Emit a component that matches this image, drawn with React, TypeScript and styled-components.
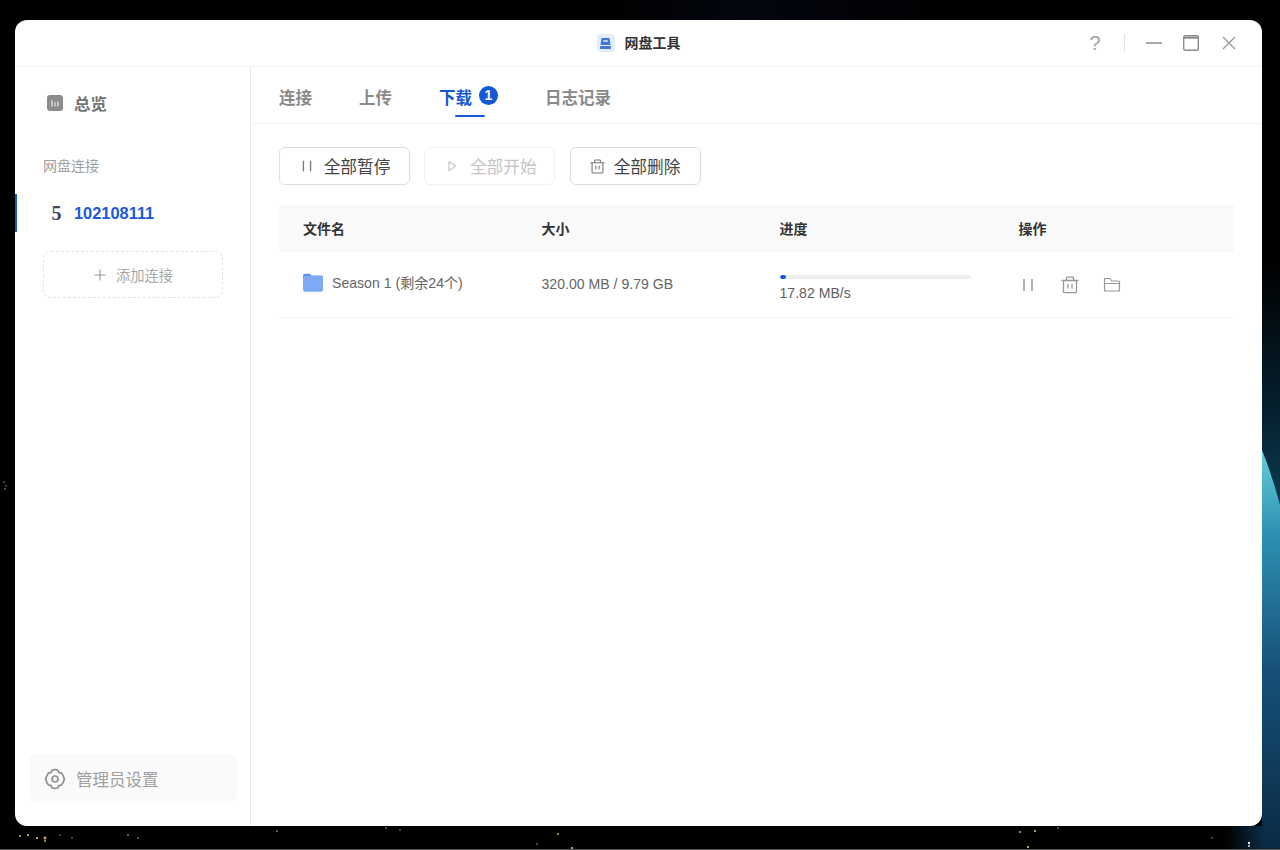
import React from "react";
import styled, { createGlobalStyle } from "styled-components";

const Global = createGlobalStyle`
  html, body { margin: 0; padding: 0; background: #000; }
  body { font-family: "Liberation Sans", "Noto Sans CJK SC", sans-serif; overflow: hidden; }
`;

const Desktop = styled.div`
  position: relative;
  width: 1280px;
  height: 850px;
  box-sizing: border-box;
  padding: 20px 18px 24px 15px;
  background: #000;
  overflow: hidden;
`;

const Wallpaper = styled.svg`
  position: absolute;
  inset: 0;
  width: 1280px;
  height: 850px;
`;

const Window = styled.div`
  position: relative;
  height: 100%;
  display: flex;
  flex-direction: column;
  background: #fff;
  border-radius: 12px;
  overflow: hidden;
`;

const TitleBar = styled.header`
  position: relative;
  height: 46px;
  flex: none;
  display: flex;
  align-items: center;
  justify-content: center;
  gap: 10px;
  border-bottom: 1px solid #f2f2f3;
`;

const AppBadge = styled.span`
  width: 18px;
  height: 18px;
  border-radius: 4px;
  background: #e3edfb;
  display: flex;
  align-items: center;
  justify-content: center;
`;

const AppTitle = styled.span`
  font-size: 14px;
  line-height: 16px;
  margin-bottom: 1px;
  font-weight: 700;
  color: #333;
`;

const WindowControls = styled.div`
  position: absolute;
  right: 25px;
  top: 14px;
  display: flex;
  align-items: center;
  color: #8c8c8c;
`;

const HelpMark = styled.span`
  width: 20px;
  text-align: center;
  font-size: 20px;
  line-height: 18px;
  color: #a0a0a0;
`;

const ControlDivider = styled.span`
  width: 1px;
  height: 18px;
  margin: 0 20px 0 19px;
  background: #e2e2e2;
`;

const Body = styled.div`
  flex: 1;
  display: flex;
  min-height: 0;
`;

const Sidebar = styled.aside`
  width: 236px;
  flex: none;
  box-sizing: border-box;
  border-right: 1px solid #e9e9ea;
  display: flex;
  flex-direction: column;
`;

const OverviewItem = styled.div`
  display: flex;
  align-items: center;
  gap: 11px;
  height: 24px;
  margin: 24px 0 0 32px;
  font-size: 16.4px;
  font-weight: 700;
  color: #737373;
`;

const SectionLabel = styled.div`
  margin: 41px 0 0 28px;
  font-size: 14px;
  line-height: 20px;
  color: #a0a0a0;
`;

const ConnectionItem = styled.div`
  height: 38px;
  margin-top: 18px;
  box-sizing: border-box;
  border-left: 2px solid #1558d6;
  padding-left: 32px;
  display: flex;
  align-items: center;
  gap: 10px;
  font-size: 16.4px;
  font-weight: 700;
  color: #1a5ad7;
`;

const ConnectionGlyph = styled.span`
  width: 15px;
  font-family: "Liberation Serif", serif;
  font-size: 20px;
  font-weight: 700;
  color: #3a4560;
  text-align: center;
`;

const AddButton = styled.div`
  width: 180px;
  height: 47px;
  margin: 19px 0 0 28px;
  box-sizing: border-box;
  border: 1px dashed #e4e4e4;
  border-radius: 8px;
  display: flex;
  align-items: center;
  justify-content: center;
  gap: 9px;
  font-size: 14.3px;
  color: #a8a8a8;
`;

const SidebarSpacer = styled.div`
  flex: 1;
`;

const AdminButton = styled.div`
  height: 49px;
  margin: 0 13px 23px 14px;
  padding-left: 15px;
  border-radius: 8px;
  background: #fafafa;
  display: flex;
  align-items: center;
  gap: 10px;
  font-size: 16.5px;
  color: #a0a0a0;
`;

const Main = styled.main`
  flex: 1;
  min-width: 0;
  display: flex;
  flex-direction: column;
`;

const Tabs = styled.nav`
  height: 57px;
  flex: none;
  box-sizing: border-box;
  padding-left: 28px;
  border-bottom: 1px solid #f2f2f3;
  display: flex;
  gap: 47px;
`;

const Tab = styled.div<{ $active?: boolean }>`
  position: relative;
  display: flex;
  align-items: flex-start;
  gap: 7px;
  padding-top: 20px;
  font-size: 16.5px;
  line-height: 22px;
  font-weight: 700;
  color: ${(p) => (p.$active ? "#1558d6" : "#8a8a8a")};
`;

const TabUnderline = styled.span`
  position: absolute;
  left: 16px;
  top: 48px;
  width: 30px;
  height: 2px;
  border-radius: 1px;
  background: #1558d6;
`;

const CountBadge = styled.span`
  width: 19px;
  height: 19px;
  margin-top: -1px;
  border-radius: 50%;
  background: #1558d6;
  color: #fff;
  font-size: 14px;
  line-height: 19px;
  text-align: center;
`;

const Content = styled.div`
  padding: 23px 28px 0;
`;

const Toolbar = styled.div`
  display: flex;
  gap: 14.25px;
`;

const ToolButton = styled.div<{ $disabled?: boolean }>`
  width: 131px;
  height: 38px;
  box-sizing: border-box;
  border: 1px solid ${(p) => (p.$disabled ? "#f1f1f1" : "#dedede")};
  border-radius: 6px;
  display: flex;
  align-items: center;
  justify-content: center;
  gap: 9px;
  font-size: 16.7px;
  color: ${(p) => (p.$disabled ? "#c4c4c4" : "#444")};
`;

const Grid = styled.div`
  display: grid;
  grid-template-columns: 238.5px 238px 239px 1fr;
  width: 955px;
`;

const HeadCell = styled.div`
  height: 47px;
  box-sizing: border-box;
  margin-top: 20px;
  padding: 0 0 2px 24px;
  display: flex;
  align-items: center;
  background: #f9f9fa;
  font-size: 14px;
  font-weight: 700;
  color: #333;
`;

const Cell = styled.div`
  height: 66px;
  box-sizing: border-box;
  padding: 0 0 2px 24px;
  border-bottom: 1px solid #f0f0f1;
  display: flex;
  align-items: center;
  font-size: 14.1px;
  color: #666;
`;

const FolderFrame = styled.span`
  display: flex;
  margin-bottom: 2px;
`;

const FileName = styled.span`
  margin: 0 0 3px 9px;
`;

const ProgressCell = styled.div`
  display: flex;
  flex-direction: column;
  margin-top: 10px;
  color: #5f5f5f;
  line-height: 17px;
`;

const Track = styled.div`
  width: 191px;
  height: 4px;
  margin-bottom: 6px;
  border-radius: 2px;
  background: #eeeeef;
  overflow: hidden;
`;

const Fill = styled.div`
  height: 100%;
  border-radius: 2px;
  background: #1558d6;
`;

const Actions = styled.div`
  display: flex;
  align-items: center;
  gap: 24px;
  margin-top: 2px;
`;

const ControlSlot = styled.span<{ $gap?: number }>`
  display: flex;
  margin-left: ${(p) => p.$gap ?? 0}px;
`;

const PauseIcon = ({ size = 18, color = "#999" }: { size?: number; color?: string }) => (
  <svg width={size} height={size} viewBox="0 0 18 18" fill="none" stroke={color} strokeWidth="1.5">
    <path d="M5 3v12M13 3v12" />
  </svg>
);

const PlayIcon = () => (
  <svg width="18" height="18" viewBox="0 0 18 18" fill="none" stroke="#c8c8c8" strokeWidth="1.2" strokeLinejoin="round">
    <path d="M6 4.500v9l6.500-4.500z" />
  </svg>
);

const TrashIcon = ({ size = 18, color = "#999" }: { size?: number; color?: string }) => (
  <svg width={size} height={size} viewBox="0 0 18 18" fill="none" stroke={color} strokeWidth="1.3" strokeLinecap="round" strokeLinejoin="round">
    <path d="M1 4.500h16M5.500 4.500V2a.8.8 0 0 1 .8-.8h5.400a.8.8 0 0 1 .8.800v2.500M2.500 4.500V15.500a1.200 1.200 0 0 0 1.200 1.200h10.600a1.200 1.200 0 0 0 1.200-1.200V4.500M7 8.500v3.500M11 8.500v3.500" />
  </svg>
);

const FolderOutline = () => (
  <svg width="18" height="18" viewBox="0 0 18 18" fill="none" stroke="#999" strokeWidth="1.2" strokeLinejoin="round">
    <path d="M1.500 3.500a1 1 0 0 1 1-1h4.500l1.600 2.500h6.900a1 1 0 0 1 1 1v8a1 1 0 0 1-1 1h-13a1 1 0 0 1-1-1zM1.500 7.500h15" />
  </svg>
);

const FolderFilled = () => (
  <svg width="20" height="20" viewBox="0 0 20 20">
    <path d="M0 2.500A1.800 1.800 0 0 1 1.800.7h5l1.700 1.800h9.700A1.800 1.800 0 0 1 20 4.300V6H0z" fill="#5d93ea" />
    <rect x="0" y="3" width="20" height="15.800" rx="2" fill="#7ea9f3" />
  </svg>
);

const AppIcon = () => (
  <svg width="13" height="13" viewBox="0 0 13 13">
    <path d="M3.500 1h6a1.200 1.200 0 0 1 1.200 1l.8 6H1.500l.8-6a1.200 1.200 0 0 1 1.200-1z" fill="#3f78d8" />
    <rect x="1" y="9" width="11" height="3" rx="0.900" fill="#3f78d8" />
    <rect x="4.300" y="3.300" width="4.400" height="1.500" fill="#e3edfb" />
  </svg>
);

const OverviewIcon = () => (
  <svg width="16" height="16" viewBox="0 0 16 16">
    <rect width="16" height="16" rx="3" fill="#8c8c8c" />
    <path d="M5 5.500v6M8 7.500v4M11 6.500v5" stroke="#eee" strokeWidth="1.200" />
  </svg>
);

const PlusIcon = () => (
  <svg width="14" height="14" viewBox="0 0 14 14" stroke="#9a9a9a" strokeWidth="1.100">
    <path d="M7 1.500v11M1.500 7h11" />
  </svg>
);

const GearIcon = () => (
  <svg width="22" height="22" viewBox="0 0 22 22" fill="none" stroke="#8f8f8f" strokeWidth="1.700" strokeLinejoin="round">
    <path d="M8 2.300q3-1.300 6 0l1 2.300 2.500.3q2 2.600 2.900 6.100-.9 3.500-2.900 6.100l-2.500.3-1 2.300q-3 1.300-6 0l-1-2.300-2.500-.3Q2.500 14.500 1.600 11q.9-3.500 2.900-6.100L7 4.600z" />
    <circle cx="11" cy="11" r="3" />
  </svg>
);

const MinimizeIcon = () => (
  <svg width="18" height="18" viewBox="0 0 18 18" stroke="#8c8c8c" strokeWidth="1.500">
    <path d="M1 9h16" />
  </svg>
);

const MaximizeIcon = () => (
  <svg width="18" height="18" viewBox="0 0 18 18" fill="none" stroke="#8c8c8c" strokeWidth="1.400">
    <rect x="1.700" y="1.700" width="14.600" height="14.600" rx="1.500" />
    <path d="M1.700 3.700h14.600" strokeWidth="2" />
  </svg>
);

const CloseIcon = () => (
  <svg width="16" height="16" viewBox="0 0 16 16" stroke="#999" strokeWidth="1.300">
    <path d="M2 2l12 12M14 2L2 14" />
  </svg>
);

const specks: [number, number, number, string][] = [
  [20, 836, 1, "#cbb070"], [28, 835, 1, "#e8c878"], [37, 838, 1.100, "#e8c878"], [45, 838, 1.500, "#d8a040"],
  [45, 841, 1, "#d8a040"], [60, 835, 0.700, "#cfae70"], [72, 838, 0.700, "#cfae70"], [128, 835, 0.800, "#ddd"],
  [138, 838, 0.700, "#ccc"], [277, 831, 0.800, "#ccc"], [386, 828, 0.700, "#ccc"], [400, 830, 0.700, "#ccc"],
  [558, 834, 1, "#d0b060"], [537, 844, 0.700, "#ccc"], [572, 848, 1.100, "#e8c878"], [1020, 832, 1, "#d0b060"],
  [1035, 831, 1.100, "#e8c878"], [1058, 828, 0.800, "#d0b060"], [1028, 847, 1, "#e8c878"], [1212, 838, 0.700, "#bbb"],
  [1249, 843, 1.200, "#eee"], [1249, 846, 1, "#ddd"], [4, 482, 0.800, "#a89060"], [6, 486, 0.800, "#a89060"],
  [5, 489, 0.800, "#c8a860"],
];

export default function App() {
  return (
    <>
      <Global />
      <Desktop>
        <Wallpaper viewBox="0 0 1280 850">
          <defs>
            <linearGradient id="planet" gradientUnits="userSpaceOnUse" x1="0" y1="450" x2="0" y2="850">
              <stop offset="0" stopColor="#66cdd8" />
              <stop offset="0.2" stopColor="#2f93b4" />
              <stop offset="0.55" stopColor="#165078" />
              <stop offset="1" stopColor="#0a2a44" />
            </linearGradient>
            <linearGradient id="edge" gradientUnits="userSpaceOnUse" x1="0" y1="260" x2="0" y2="510">
              <stop offset="0" stopColor="#000" />
              <stop offset="0.6" stopColor="#06202f" />
              <stop offset="1" stopColor="#0a3d52" />
            </linearGradient>
            <linearGradient id="fade" gradientUnits="userSpaceOnUse" x1="1225" y1="0" x2="1265" y2="0">
              <stop offset="0" stopColor="#000" />
              <stop offset="1" stopColor="#000" stopOpacity="0" />
            </linearGradient>
            <linearGradient id="topGlow" x1="0" y1="0" x2="1" y2="0">
              <stop offset="0" stopColor="#000" />
              <stop offset="0.4" stopColor="#03060f" />
              <stop offset="1" stopColor="#000" />
            </linearGradient>
          </defs>
          <rect x="600" y="0" width="360" height="20" fill="url(#topGlow)" />
          <rect x="1262" y="260" width="18" height="250" fill="url(#edge)" />
          <path d="M1262 450 Q1272 475 1280 505 V850 H1225 V826 H1262 Z" fill="url(#planet)" />
          <rect x="1225" y="826" width="40" height="24" fill="url(#fade)" />
          {specks.map(([x, y, r, c], i) => (
            <circle key={i} cx={x} cy={y} r={r} fill={c} />
          ))}
          <rect x="0" y="849" width="1280" height="1" fill="#555" />
        </Wallpaper>
        <Window>
          <TitleBar>
            <AppBadge>
              <AppIcon />
            </AppBadge>
            <AppTitle>网盘工具</AppTitle>
            <WindowControls>
              <HelpMark>?</HelpMark>
              <ControlDivider />
              <MinimizeIcon />
              <ControlSlot $gap={19}>
                <MaximizeIcon />
              </ControlSlot>
              <ControlSlot $gap={21}>
                <CloseIcon />
              </ControlSlot>
            </WindowControls>
          </TitleBar>
          <Body>
            <Sidebar>
              <OverviewItem>
                <OverviewIcon />
                总览
              </OverviewItem>
              <SectionLabel>网盘连接</SectionLabel>
              <ConnectionItem>
                <ConnectionGlyph>5</ConnectionGlyph>
                102108111
              </ConnectionItem>
              <AddButton>
                <PlusIcon />
                添加连接
              </AddButton>
              <SidebarSpacer />
              <AdminButton>
                <GearIcon />
                管理员设置
              </AdminButton>
            </Sidebar>
            <Main>
              <Tabs>
                <Tab>连接</Tab>
                <Tab>上传</Tab>
                <Tab $active>
                  下载
                  <CountBadge>1</CountBadge>
                  <TabUnderline />
                </Tab>
                <Tab>日志记录</Tab>
              </Tabs>
              <Content>
                <Toolbar>
                  <ToolButton>
                    <PauseIcon size={16} color="#777" />
                    全部暂停
                  </ToolButton>
                  <ToolButton $disabled>
                    <PlayIcon />
                    全部开始
                  </ToolButton>
                  <ToolButton>
                    <TrashIcon size={15} color="#777" />
                    全部删除
                  </ToolButton>
                </Toolbar>
                <Grid>
                  <HeadCell>文件名</HeadCell>
                  <HeadCell>大小</HeadCell>
                  <HeadCell>进度</HeadCell>
                  <HeadCell>操作</HeadCell>
                  <Cell>
                    <FolderFrame>
                      <FolderFilled />
                    </FolderFrame>
                    <FileName>Season 1 (剩余24个)</FileName>
                  </Cell>
                  <Cell>320.00 MB / 9.79 GB</Cell>
                  <Cell>
                    <ProgressCell>
                      <Track>
                        <Fill style={{ width: `${(320 / 10025) * 100}%` }} />
                      </Track>
                      17.82 MB/s
                    </ProgressCell>
                  </Cell>
                  <Cell>
                    <Actions>
                      <PauseIcon />
                      <TrashIcon />
                      <FolderOutline />
                    </Actions>
                  </Cell>
                </Grid>
              </Content>
            </Main>
          </Body>
        </Window>
      </Desktop>
    </>
  );
}
